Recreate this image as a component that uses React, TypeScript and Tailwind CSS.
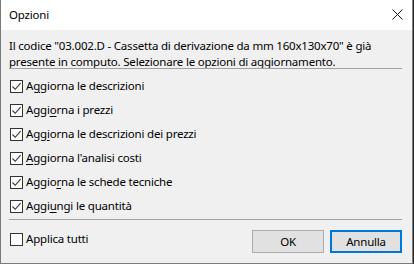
import type { ReactNode } from "react";

const FONT = "font-['Segoe_UI','Noto_Sans',sans-serif] text-[11.5px] tracking-[-0.2px]";

interface Option {
  before: string;
  key: string;
  after: string;
  checked: boolean;
}

const OPTIONS: Option[] = [
  { before: "A", key: "g", after: "giorna le descrizioni", checked: true },
  { before: "Aggi", key: "o", after: "rna i prezzi", checked: true },
  { before: "Agg", key: "i", after: "orna le descrizioni dei prezzi", checked: true },
  { before: "", key: "A", after: "ggiorna l'analisi costi", checked: true },
  { before: "Aggio", key: "r", after: "na le schede tecniche", checked: true },
  { before: "Aggi", key: "u", after: "ngi le quantità", checked: true },
];

function Box({ checked }: { checked: boolean }) {
  return (
    <span className="flex h-[13px] w-[13px] shrink-0 items-center justify-center border border-[#333333] bg-white">
      {checked && (
        <svg width="11" height="11" viewBox="0 0 11 11">
          <path d="M1.5 5.5 L4.2 8.3 L9.6 2.2" fill="none" stroke="#333333" strokeWidth="1.1" />
        </svg>
      )}
    </span>
  );
}

function CheckRow({
  checked,
  className = "h-[24px]",
  children,
}: {
  checked: boolean;
  className?: string;
  children: ReactNode;
}) {
  return (
    <label className={`flex items-center gap-[3px] pl-[1px] ${className}`}>
      <Box checked={checked} />
      <span className="leading-[16px] text-black">{children}</span>
    </label>
  );
}

export default function App() {
  return (
    <div className={`h-[264px] w-[414px] bg-[#2a2a2a] ${FONT}`}>
      <div className="flex h-[264px] w-[413px] flex-col border-x border-b border-[#7a7a7a] bg-[#f0f0f0]">
        {/* title bar */}
        <div className="flex h-[30px] shrink-0 items-center justify-between bg-white pl-[8px] pr-[9px]">
          <span className="text-black">Opzioni</span>
          <svg width="11" height="11" viewBox="0 0 11 11" className="mb-[2px]">
            <path d="M0.5 0.5 L10.5 10.5 M10.5 0.5 L0.5 10.5" stroke="#111" strokeWidth="1" />
          </svg>
        </div>

        <div className="flex flex-1 flex-col pl-[8px] pr-[10px] pt-[8px]">
          <p className="leading-[16px] text-black">
            Il codice "03.002.D - Cassetta di derivazione da mm 160x130x70" è già
            <br />
            presente in computo. Selezionare le opzioni di aggiornamento.
          </p>
          <div className="-mt-[2px] h-px bg-[#a0a0a0]" />

          <div className="mt-[5px] flex flex-col">
            {OPTIONS.map((o) => (
              <CheckRow key={o.before + o.key + o.after} checked={o.checked}>
                {o.before}
                <span className="underline underline-offset-2">{o.key}</span>
                {o.after}
              </CheckRow>
            ))}
          </div>

          <div className="mt-px h-px bg-[#a0a0a0]" />

          <div className="mt-[10px] flex items-start justify-between">
            <CheckRow checked={false} className="mt-[1px] h-[16px]">
              Applica tutti
            </CheckRow>
            <div className="flex gap-[6px]">
              <button className="h-[23px] w-[72px] border border-[#adadad] bg-[#e1e1e1] text-black">
                OK
              </button>
              <button className="h-[23px] w-[72px] border-2 border-[#0078d7] bg-[#e1e1e1] text-black">
                Annulla
              </button>
            </div>
          </div>
        </div>
      </div>
    </div>
  );
}
